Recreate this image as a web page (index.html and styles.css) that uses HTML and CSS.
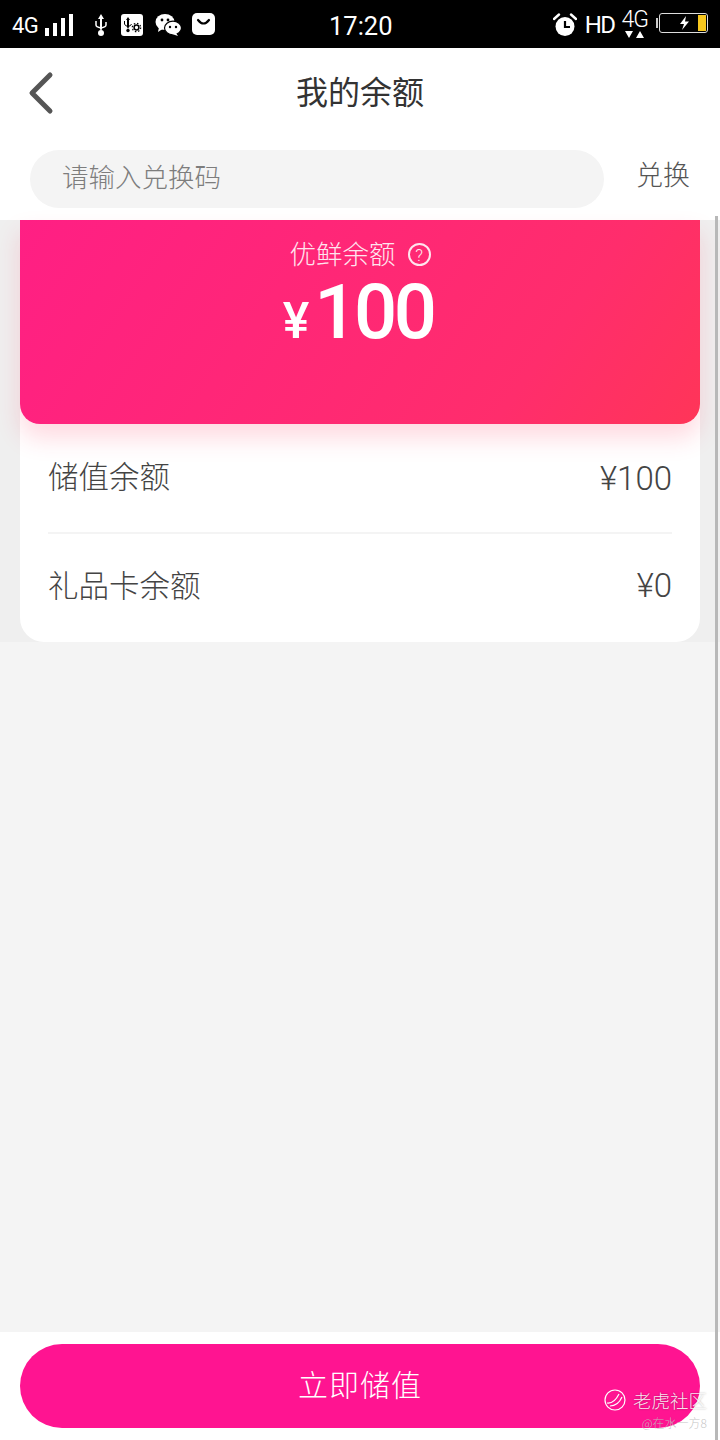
FILE: index.html
```html
<!DOCTYPE html>
<html lang="zh">
<head>
    <meta charset="UTF-8">
    <meta name="viewport" content="width=device-width, initial-scale=1.0">
    <title>我的余额</title>
    <link rel="stylesheet" href="styles.css">
</head>
<body>
    <!-- Status Bar -->
    <div class="status-bar">
        <div class="status-left">
            <span class="net-type">4G</span>
            <svg class="signal" width="30" height="24" viewBox="0 0 30 24"><rect x="1" y="15" width="4" height="8" fill="#fff"/><rect x="9" y="10" width="4" height="13" fill="#fff"/><rect x="17" y="5" width="4" height="18" fill="#fff"/><rect x="25" y="1" width="4" height="22" fill="#fff"/></svg>
            <svg class="usb" width="16" height="24" viewBox="0 0 16 24"><path d="M8 1 L11 6 H9 V16 L8 18 L7 16 V6 H5 Z" fill="#fff"/><path d="M3 8 V12 Q3 14 8 15 Q13 14 13 12 V9" fill="none" stroke="#fff" stroke-width="1.500"/><circle cx="8" cy="20" r="3" fill="#fff"/></svg>
            <svg class="usb-gear" width="22" height="22" viewBox="0 0 22 22"><rect width="22" height="22" rx="3" fill="#fff"/><path d="M7 3 L9 6 H8 V13 L7 15 L6 13 V6 H5 Z" fill="#000"/><path d="M3.500 7 V10 Q4 12 7 12.500 Q10 12 10.500 10" fill="none" stroke="#000" stroke-width="1"/><circle cx="7" cy="16.500" r="1.700" fill="#000"/><circle cx="15.500" cy="13.500" r="2.400" fill="none" stroke="#000" stroke-width="1.500"/><circle cx="15.500" cy="13.500" r="4.200" fill="none" stroke="#000" stroke-width="1.200" stroke-dasharray="1.500 1.800"/></svg>
            <svg class="wechat" width="26" height="22" viewBox="0 0 26 22"><ellipse cx="10" cy="8" rx="9.500" ry="8" fill="#fff"/><path d="M4 13 L3 18 L9 14 Z" fill="#fff"/><circle cx="7" cy="6" r="1.400" fill="#000"/><circle cx="13" cy="6" r="1.400" fill="#000"/><ellipse cx="18" cy="14" rx="8.500" ry="6.800" fill="#fff" stroke="#000" stroke-width="1.200"/><path d="M21 19 L23 22 L17 20 Z" fill="#fff"/><circle cx="15" cy="13" r="1.200" fill="#000"/><circle cx="21" cy="13" r="1.200" fill="#000"/></svg>
            <svg class="shop" width="23" height="22" viewBox="0 0 23 22"><rect width="23" height="22" rx="5" fill="#fff"/><path d="M6 7 Q11.500 14 17 7" fill="none" stroke="#000" stroke-width="2.200" stroke-linecap="round"/></svg>
        </div>
        <span class="clock">17:20</span>
        <div class="status-right">
            <svg class="alarm" width="24" height="24" viewBox="0 0 24 24"><circle cx="12" cy="13.500" r="9.500" fill="#fff"/><path d="M1 6 L6 1.500 M23 6 L18 1.500" stroke="#fff" stroke-width="2.400" stroke-linecap="round"/><path d="M12 8 V14 H17" fill="none" stroke="#000" stroke-width="2.200"/></svg>
            <span class="hd">HD</span>
            <div class="net-4g">
                <span>4G</span>
                <svg width="19" height="9" viewBox="0 0 19 9"><path d="M0 1 H8 L4 8 Z M11 8 H19 L15 1 Z" fill="#fff"/></svg>
            </div>
            <span class="battery-tick"></span>
            <div class="battery">
                <svg class="bolt" width="12" height="14" viewBox="0 0 12 14"><path d="M8 0 L2 8 H6 L4 14 L11 5.500 H7 Z" fill="#fff"/></svg>
                <span class="battery-level"></span>
            </div>
        </div>
    </div>

    <!-- Header -->
    <header class="nav-bar">
        <svg class="back" width="30" height="48" viewBox="0 0 30 48"><path d="M24 6 L6 24 L24 42" fill="none" stroke="#555" stroke-width="5" stroke-linecap="round" stroke-linejoin="round"/></svg>
        <h1>我的余额</h1>
    </header>

    <!-- Redeem Code -->
    <div class="redeem">
        <div class="redeem-input">请输入兑换码</div>
        <span class="redeem-btn">兑换</span>
    </div>

    <!-- Balance -->
    <section class="balance-area">
        <div class="balance-panel">
            <div class="balance-card">
                <div class="balance-title">
                    <span>优鲜余额</span>
                    <span class="help">?</span>
                </div>
                <div class="balance-amount"><span class="yen">¥</span>100</div>
            </div>
            <div class="balance-row">
                <span class="row-label">储值余额</span>
                <span class="row-value">¥100</span>
            </div>
            <div class="balance-row">
                <span class="row-label">礼品卡余额</span>
                <span class="row-value">¥0</span>
            </div>
        </div>
    </section>

    <div class="spacer"></div>

    <!-- Footer Button -->
    <footer class="action-bar">
        <button class="charge-btn">立即储值</button>
    </footer>

    <!-- Watermark -->
    <div class="watermark">
        <div class="wm-brand">
            <svg width="22" height="22" viewBox="0 0 22 22"><circle cx="11" cy="11" r="10" fill="none" stroke="#fff" stroke-width="1.200"/><path d="M3 14 Q10 15 15 5 M6 17 Q14 17 18 8" fill="none" stroke="#fff" stroke-width="1.200"/></svg>
            <span>老虎社区</span>
        </div>
        <div class="wm-user">@在水一方8</div>
    </div>

    <div class="scrollbar"></div>
</body>
</html>
```

FILE: styles.css
```css
* {
    box-sizing: border-box;
}

html, body {
    margin: 0;
    padding: 0;
}

body {
    position: relative;
    display: flex;
    flex-direction: column;
    width: 720px;
    height: 1440px;
    overflow: hidden;
    background-color: #f4f4f4;
    font-family: "Noto Sans CJK SC", Roboto, sans-serif;
    font-weight: 300;
    color: #444;
}

/* Status bar */
.status-bar {
    position: relative;
    display: flex;
    justify-content: space-between;
    align-items: center;
    height: 48px;
    padding: 0 12px;
    background-color: #000;
    color: #fff;
    font-family: Roboto, sans-serif;
    font-weight: 400;
}

.status-left, .status-right {
    display: flex;
    align-items: center;
}

.status-left {
    padding-top: 2px;
}

.net-type {
    font-size: 22px;
    letter-spacing: -0.5px;
}

.signal {
    margin-left: 6px;
}

.usb {
    margin-left: 19px;
}

.usb-gear {
    margin-left: 12px;
}

.wechat {
    margin-left: 12px;
}

.shop {
    margin-left: 11px;
    margin-top: -3px;
}

.clock {
    position: absolute;
    left: 329px;
    top: 10px;
    font-size: 25.500px;
    line-height: 32px;
}

.status-right {
    padding-top: 1px;
}

.hd {
    margin-left: 8px;
    font-size: 24px;
    letter-spacing: -1.500px;
}

.net-4g {
    display: flex;
    flex-direction: column;
    align-items: center;
    margin-left: 7px;
    font-size: 23px;
    font-weight: 300;
    line-height: 20px;
    letter-spacing: -1px;
}

.net-4g svg {
    display: block;
    flex-shrink: 0;
}

.battery-tick {
    width: 2px;
    height: 10px;
    margin-left: 8px;
    margin-top: -4px;
    background-color: #ccc;
}

.battery {
    position: relative;
    display: flex;
    justify-content: flex-end;
    align-items: center;
    width: 49px;
    height: 20px;
    margin-left: 1px;
    margin-top: -4px;
    padding: 1px;
    border: 1px solid #ddd;
    border-radius: 3px;
}

.bolt {
    position: absolute;
    left: 18px;
    top: 2px;
}

.battery-level {
    width: 8px;
    height: 100%;
    background-color: #f7c71e;
}

/* Header */
.nav-bar {
    position: relative;
    display: flex;
    justify-content: center;
    align-items: center;
    height: 90px;
    padding-bottom: 6px;
    background-color: #fff;
}

.nav-bar h1 {
    margin: 0;
    font-size: 32px;
    font-weight: 400;
    color: #333;
}

.back {
    position: absolute;
    left: 26px;
    top: 21px;
}

/* Redeem */
.redeem {
    display: flex;
    align-items: flex-start;
    height: 82px;
    padding: 12px 30px 0;
    background-color: #fff;
}

.redeem-input {
    width: 574px;
    height: 58px;
    padding-left: 32px;
    border-radius: 29px;
    background-color: #f4f4f4;
    font-size: 26.500px;
    line-height: 52px;
    color: #7d7d7d;
}

.redeem-btn {
    margin-left: 32px;
    font-size: 27px;
    line-height: 48px;
    color: #555;
}

/* Balance */
.balance-area {
    height: 422px;
    padding: 0 20px;
    background-color: #efefef;
}

.balance-panel {
    height: 100%;
    border-radius: 0 0 24px 24px;
    background-color: #fff;
}

.balance-card {
    display: flex;
    flex-direction: column;
    align-items: center;
    height: 204px;
    padding-top: 16px;
    border-radius: 0 0 20px 20px;
    background: linear-gradient(125deg, #ff1f84, #ff2d6c 75%, #ff3558);
    box-shadow: 0 14px 24px rgba(255, 51, 89, 0.18);
    color: #fff;
}

.balance-title {
    display: flex;
    align-items: center;
    height: 34px;
    font-size: 26.500px;
    line-height: 34px;
    opacity: 0.88;
}

.help {
    display: flex;
    justify-content: center;
    align-items: center;
    width: 23px;
    height: 23px;
    margin-left: 12px;
    margin-top: 3px;
    border: 2px solid #fff;
    border-radius: 50%;
    font-size: 17px;
    line-height: 20px;
    font-family: Roboto, sans-serif;
}

.balance-amount {
    display: flex;
    align-items: baseline;
    margin-top: 2px;
    margin-right: 4px;
    font-family: Roboto, sans-serif;
    font-size: 76px;
    font-weight: 500;
    line-height: 80px;
    letter-spacing: -3.500px;
}

.yen {
    margin-right: 5px;
    font-size: 50px;
    font-weight: 500;
    letter-spacing: 0;
}

.balance-row {
    display: flex;
    justify-content: space-between;
    align-items: center;
    height: 108px;
    margin: 0 28px;
    font-size: 30.500px;
    color: #444;
}

.balance-row + .balance-row {
    height: 110px;
    padding-bottom: 6px;
    border-top: 2px solid #f4f4f4;
}

.row-label {
    margin-bottom: 6px;
}

.balance-row + .balance-row .row-label {
    margin-bottom: 2px;
}

.row-value {
    font-family: Roboto, sans-serif;
    font-weight: 300;
    font-size: 33px;
}

.spacer {
    flex: 1;
}

/* Footer */
.action-bar {
    height: 108px;
    padding: 12px 20px 0;
    background-color: #fff;
}

.charge-btn {
    display: block;
    width: 100%;
    height: 84px;
    padding: 0 0 6px;
    border: none;
    border-radius: 42px;
    background-color: #ff1491;
    color: #fff;
    font-family: inherit;
    font-size: 30px;
    font-weight: 300;
    letter-spacing: 1px;
}

/* Watermark */
.watermark {
    position: absolute;
    right: 13px;
    bottom: 6px;
    display: flex;
    flex-direction: column;
    align-items: flex-end;
    color: rgba(255, 255, 255, 0.9);
}

.wm-brand {
    display: flex;
    align-items: center;
    gap: 7px;
    font-size: 18.500px;
    line-height: 24px;
    text-shadow: 0 0 2px rgba(0, 0, 0, 0.35);
}

.wm-user {
    font-size: 12px;
    line-height: 22px;
    color: rgba(190, 190, 190, 0.9);
}

.scrollbar {
    position: absolute;
    top: 216px;
    right: 2px;
    bottom: 0;
    width: 3px;
    background-color: #b8b8b8;
}
```
